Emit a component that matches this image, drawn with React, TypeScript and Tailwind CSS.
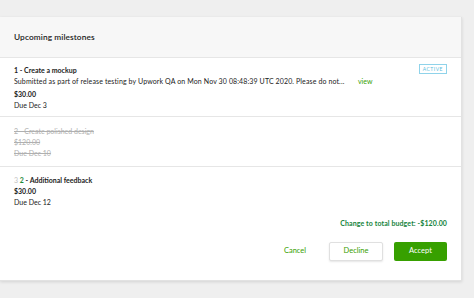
export default function App() {
  const font = { fontFamily: "Lato, 'Open Sans', sans-serif" };
  return (
    <div className="h-[298px] w-[474px] bg-[#efefef] pt-[17px] overflow-hidden" style={font}>
      <div className="w-[462px] h-[264px] bg-white border-r border-b border-[#e2e2e2] shadow-[0_1px_3px_rgba(0,0,0,0.12)] flex flex-col">
        {/* header */}
        <div className="h-[41px] bg-[#f7f7f7] border-b border-[#e6e6e6] flex items-center pl-[14px]">
          <span className="text-[8.3px] font-semibold text-[#222] tracking-[0.1px]">Upcoming milestones</span>
        </div>

        {/* milestone 1 */}
        <div className="relative border-b border-[#e6e6e6] pl-[14px] pt-[7px] h-[59px] text-[7px] leading-[11px] text-[#222] whitespace-nowrap">
          <div className="font-bold">1 - Create a mockup</div>
          <div className="flex">
            <span className="w-[331px] overflow-hidden tracking-[0.12px]">Submitted as part of release testing by Upwork QA on Mon Nov 30 08:48:39 UTC 2020. Please do not...</span>
            <span className="text-[#37a000] ml-[13px]">view</span>
          </div>
          <div className="font-bold mt-[2px]">$30.00</div>
          <div>Due Dec 3</div>
          <span className="absolute right-[14px] top-[6px] border border-[#8fd3ea] text-[#5bbcdc] text-[5px] tracking-[0.5px] px-[3px] leading-[8px]">ACTIVE</span>
        </div>

        {/* milestone 2 */}
        <div className="border-b border-[#e6e6e6] pl-[14px] pt-[9px] h-[50px] text-[7px] leading-[11px] text-[#b0b0b0] line-through">
          <div>2 - Create polished design</div>
          <div>$120.00</div>
          <div>Due Dec 10</div>
        </div>

        {/* milestone 3 */}
        <div className="pl-[14px] pt-[8px] text-[7px] leading-[11px] text-[#222]">
          <div className="font-bold">
            <span className="text-[#c4c4c4] font-normal">3 </span>
            <span className="text-[#1d8a3a]">2</span> - Additional feedback
          </div>
          <div className="font-bold">$30.00</div>
          <div>Due Dec 12</div>
        </div>

        <div className="flex justify-end pr-[14px] mt-[10px]">
          <span className="text-[7px] font-bold text-[#14833b] tracking-[0.1px]">Change to total budget: -$120.00</span>
        </div>

        <div className="flex justify-end items-center pr-[14px] mt-[13px]">
          <button className="text-[7.5px] text-[#37a000] w-[40px] h-[19px] mr-[14px]">Cancel</button>
          <button className="text-[7.5px] text-[#37a000] w-[54px] h-[19px] bg-white border border-[#e0e0e0] shadow-[0_1px_2px_rgba(0,0,0,0.1)] rounded-[2px] mr-[11px]">Decline</button>
          <button className="text-[7.5px] text-white w-[53px] h-[19px] bg-[#37a000] rounded-[2px]">Accept</button>
        </div>
      </div>
    </div>
  );
}
